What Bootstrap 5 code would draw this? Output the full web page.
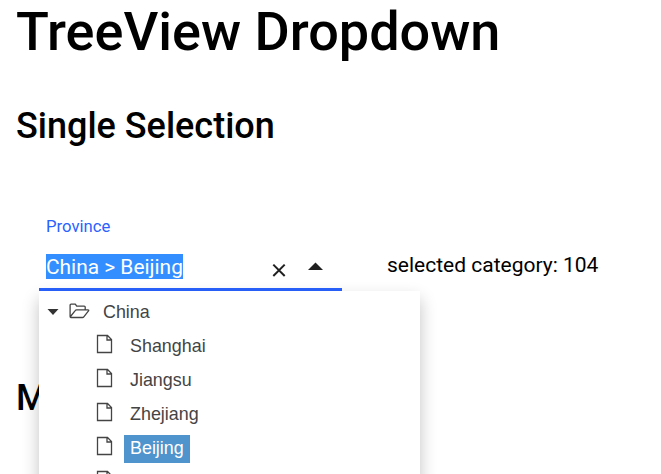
<!DOCTYPE html>
<html lang="en">
<head>
<meta charset="utf-8">
<meta name="viewport" content="width=device-width, initial-scale=1">
<title>TreeView Dropdown</title>
<link rel="stylesheet" href="https://cdn.jsdelivr.net/npm/bootstrap@5.3.0/dist/css/bootstrap.min.css">
<style>
html, body { height: 474px; overflow: hidden; }
body { font-family: Roboto, sans-serif; color: #000; background: #fff; }
main { height: 474px; }
h1, h2 { font-weight: 500; white-space: nowrap; }
h1 { font-size: 54px; line-height: 64px; }
h2 { font-size: 36px; line-height: 44px; }
.title-single { margin-top: 40px; }
.title-multi { margin-top: 85px; }
.picker-row { margin: 65px 0 0 23px; }
.picker { width: 303px; height: 78px; border-bottom: 3px solid #2962ff; }
.picker-label { font-size: 16.7px; line-height: 24px; padding: 2px 0 0 7px; color: #2962ff; }
.picker-value { height: 26px; margin: 15px 0 0 7px; }
.picked { font-size: 20.9px; line-height: 27px; height: 25px; background: #338fff; color: #fff; white-space: nowrap; }
.clear-icon { margin: 4px 22px 0 auto; }
.arrow-icon { margin: 0 19px 0 0; }
.summary { font-size: 21px; line-height: 28px; margin: 38px 0 0 45px; white-space: nowrap; }
.tree-menu { top: 78px; left: 0; width: 381px; height: 210px; padding-top: 5px; z-index: 5;
  font: 17.9px/24px "Liberation Sans", Arial, sans-serif; color: #444;
  box-shadow: 0 8px 16px rgba(0,0,0,.24); }
.tree-item { height: 34px; }
.tree-root { padding-left: 8px; }
.tree-leaf { padding-left: 57px; }
.tree-text { padding: 1px 6px 3px; height: 28px; }
.tree-root .tree-text { margin-left: 6px; }
.tree-leaf .tree-text { margin-left: 11px; }
.tree-text.chosen { background: #4f94cd; color: #fff; }
svg { display: block; flex: none; }
.file { margin-top: -6px; }
.folder { margin: -5px 0 0 8px; }
.toggle { margin-top: -3px; }
</style>
</head>
<body>
<main class="ps-3 overflow-hidden">
  <h1 class="mb-0">TreeView Dropdown</h1>
  <h2 class="title-single mb-0">Single Selection</h2>
  <div class="picker-row d-flex align-items-start">
    <div class="position-relative">
      <div class="picker">
        <div class="picker-label">Province</div>
        <div class="picker-value d-flex align-items-start">
          <span class="picked">China &gt; Beijing</span>
          <svg class="clear-icon" width="14" height="25" viewBox="0 0 14 25"><path d="M1.3 6.6 12.7 18M12.7 6.6 1.3 18" stroke="#202020" stroke-width="2" fill="none"/></svg>
          <svg class="arrow-icon" width="15" height="25" viewBox="0 0 15 25"><path d="M0 16 7.5 8.5 15 16z" fill="#202020"/></svg>
        </div>
      </div>
      <div class="tree-menu position-absolute bg-white">
        <div class="tree-item tree-root d-flex align-items-center">
          <svg class="toggle" width="12" height="8" viewBox="0 0 12 8"><path d="M.5 1h11L6 7z" fill="#333"/></svg>
          <svg class="folder" width="24" height="18" viewBox="0 0 24 18"><path d="M3.9 15.5q-.8 0-.8-.9V3.1q0-1 1-1h4.2l1.4 2h7.500q1 0 1 1v2.800M3.900 15.500h11.600q.8 0 1.300-.7l4.700-5.900q.7-1-.6-1H9.500q-.8 0-1.300.7l-4.700 5.900" fill="none" stroke="#444" stroke-width="1.3" stroke-linejoin="round"/></svg>
          <span class="tree-text">China</span>
        </div>
        <div class="tree-item tree-leaf d-flex align-items-center"><svg class="file" width="17" height="20" viewBox="0 0 17 20"><path d="M1.5 1.5h10l4 4v13h-14zM11 1.5V6h4.500" fill="none" stroke="#444" stroke-width="1.3"/></svg><span class="tree-text">Shanghai</span></div>
        <div class="tree-item tree-leaf d-flex align-items-center"><svg class="file" width="17" height="20" viewBox="0 0 17 20"><path d="M1.5 1.5h10l4 4v13h-14zM11 1.5V6h4.500" fill="none" stroke="#444" stroke-width="1.3"/></svg><span class="tree-text">Jiangsu</span></div>
        <div class="tree-item tree-leaf d-flex align-items-center"><svg class="file" width="17" height="20" viewBox="0 0 17 20"><path d="M1.5 1.5h10l4 4v13h-14zM11 1.5V6h4.500" fill="none" stroke="#444" stroke-width="1.3"/></svg><span class="tree-text">Zhejiang</span></div>
        <div class="tree-item tree-leaf d-flex align-items-center"><svg class="file" width="17" height="20" viewBox="0 0 17 20"><path d="M1.5 1.5h10l4 4v13h-14zM11 1.5V6h4.500" fill="none" stroke="#444" stroke-width="1.3"/></svg><span class="tree-text chosen">Beijing</span></div>
        <div class="tree-item tree-leaf d-flex align-items-center"><svg class="file" width="17" height="20" viewBox="0 0 17 20"><path d="M1.5 1.5h10l4 4v13h-14zM11 1.5V6h4.500" fill="none" stroke="#444" stroke-width="1.3"/></svg></div>
      </div>
    </div>
    <div class="summary">selected category: 104</div>
  </div>
  <h2 class="title-multi mb-0">M</h2>
</main>
<script src="https://cdn.jsdelivr.net/npm/bootstrap@5.3.0/dist/js/bootstrap.bundle.min.js"></script>
</body>
</html>
